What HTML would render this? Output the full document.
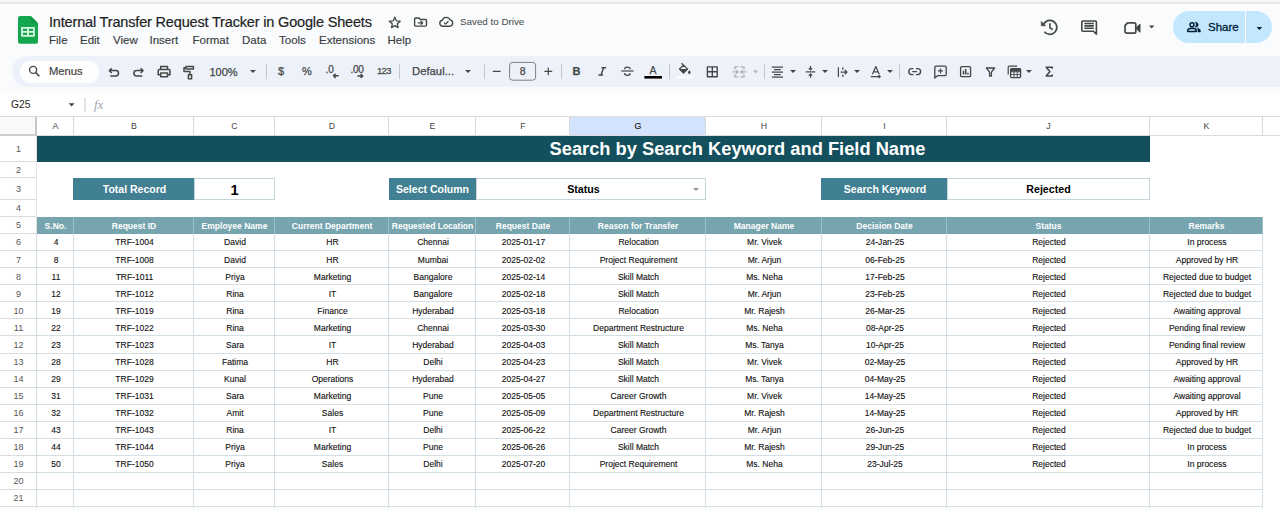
<!DOCTYPE html>
<html><head><meta charset="utf-8">
<style>
html,body{margin:0;padding:0}
body{width:1280px;height:508px;overflow:hidden;background:#f9fbfd;font-family:"Liberation Sans",sans-serif;position:relative;color:#1f1f1f}
div{box-sizing:border-box}
#topline{position:absolute;left:0;top:0;width:1280px;height:5px;height:7px;background:linear-gradient(#f7f7f7 0,#f5f5f5 1.8px,#e2e2e2 2.2px,#e6e6e6 3.4px,#fdfdfd 4px,#fdfdfd 5.5px,#f9fbfd 7px)}
#title{position:absolute;left:49px;top:13.5px;font-size:14.5px;color:#1f1f1f;-webkit-text-stroke:0.2px #1f1f1f;white-space:nowrap;letter-spacing:-0.17px}
.menu{position:absolute;top:33.5px;font-size:11.5px;color:#3a3d3f;-webkit-text-stroke:0.15px #3a3d3f;white-space:nowrap}
#saved{position:absolute;left:460px;top:15.8px;font-size:9.8px;color:#444746}
#toolbar{position:absolute;left:12px;top:56px;width:1290px;height:31px;border-radius:16px;background:#edf2fa}
#menus{position:absolute;left:19.5px;top:60.5px;width:79.5px;height:22px;border-radius:11px;background:#fff}
#menus span{position:absolute;left:29.5px;top:4px;font-size:11.2px;color:#444746;-webkit-text-stroke:0.2px #444746}
.tb{position:absolute;font-size:11.5px;color:#444746;white-space:nowrap;-webkit-text-stroke:0.25px #444746}
.sep{position:absolute;top:64px;width:1px;height:15px;background:#c7c7c7}
.arr{position:absolute;width:0;height:0;border-left:3px solid transparent;border-right:3px solid transparent;border-top:3.5px solid #444746;margin-left:0.5px}
#fbar{position:absolute;left:0;top:93px;width:1280px;height:24px;background:#fff}
#namebox{position:absolute;left:11px;top:98.5px;font-size:10.3px;color:#1f1f1f}
#share{position:absolute;left:1173px;top:11px;width:99px;height:32px;border-radius:16px;background:#c2e7ff}
#share .t{position:absolute;left:35px;top:9.5px;font-size:11.5px;color:#001d35;-webkit-text-stroke:0.3px #001d35}
#share .d{position:absolute;left:72px;top:0;width:1px;height:32px;background:#f9fbfd}
svg{position:absolute;overflow:visible}
/* grid */
#grid{position:absolute;left:0;top:0;width:1280px;height:508px}
#sheet{position:absolute;left:0;top:117px;width:1280px;height:400px;background:#fff}
#grid>div{position:absolute}
.colhdr-bg{left:0;top:116px;width:1280px;height:20px;background:#fff;border-top:1px solid #dcdcdc;border-bottom:1px solid #dcdcdc}
.ch{font-size:8.8px;color:#444;text-align:center;line-height:19px;padding-left:1px;border-right:1px solid #d9d9d9;background:#fff}
.ch.sel{background:#d3e3fd;color:#1f1f1f;-webkit-text-stroke:0.2px #1f1f1f}
.corner{left:0;top:117px;width:37px;height:19px;background:#f8f9fa;border-right:2.5px solid #c6c6c6;border-bottom:2.5px solid #cfcfcf}
.rh{font-size:9px;color:#555;text-align:center;border-right:1px solid #e3e3e3;padding-left:1px}
.rl{background:#dcdcdc}
.gl{background:#d2e0e6}
.banner{background:#134f5c;color:#fff;font-weight:bold;font-size:18.3px;text-align:center;line-height:26px;padding-left:288px}
.lbl{background:#417f92;color:#fff;font-weight:bold;font-size:10.5px;text-align:center;line-height:22px}
.val{background:#fff;border:1px solid #c4d5db;color:#000;font-weight:bold;font-size:10.67px;text-align:center;line-height:20px}
.val.big{font-size:14.67px;line-height:22px}
.dd{position:absolute;right:6.5px;top:8.5px;width:0;height:0;border-left:3px solid transparent;border-right:3px solid transparent;border-top:3.5px solid #8f8f8f}
.th{background:#76a5af;color:#fff;font-weight:bold;font-size:8.53px;text-align:center;line-height:18px;padding-left:1px;border-right:1px solid #9fc0c7;white-space:nowrap}
.td{font-size:8.53px;color:#111;-webkit-text-stroke:0.12px #111;text-align:center;line-height:17px;padding-left:1px;white-space:nowrap}
</style></head><body>
<div id="topline"></div>
<!-- logo -->
<svg style="left:17.500px;top:15.800px" width="20" height="28" viewBox="0 0 20 28"><path d="M2.200 0h10.600l7.200 7.200v18.600a2 2 0 0 1-2 2H2.200a2.200 2.200 0 0 1-2.200-2.200V2.200a2.200 2.200 0 0 1 2.200-2.200z" fill="#14a750"/><path d="M12.800 0l7.200 7.200h-5.200a2 2 0 0 1-2-2z" fill="#0f9645"/><path d="M3.100 11h13.700v9.700H3.100zM4.900 12.800v2.100h4.100v-2.100zM10.900 12.800v2.100H15v-2.100zM4.900 16.800v2.100h4.100v-2.100zM10.900 16.800v2.100H15v-2.100z" fill="#d6f5df" fill-rule="evenodd"/></svg>
<div id="title">Internal Transfer Request Tracker in Google Sheets</div>
<div class="menu" style="left:49px">File</div>
<div class="menu" style="left:80px">Edit</div>
<div class="menu" style="left:113px">View</div>
<div class="menu" style="left:149.5px">Insert</div>
<div class="menu" style="left:192.5px">Format</div>
<div class="menu" style="left:242px">Data</div>
<div class="menu" style="left:279px">Tools</div>
<div class="menu" style="left:319px">Extensions</div>
<div class="menu" style="left:387.5px">Help</div>
<div id="saved">Saved to Drive</div>
<!--HEADICONS-->
<div id="share"><div class="t">Share</div><div class="d"></div></div>
<div id="fbar"></div>
<div id="toolbar"></div>
<div id="menus"><span>Menus</span></div>

<div class="tb" style="left:209.500px;top:65.500px;font-size:11px">100%</div>
<div class="arr" style="left:249px;top:69.500px"></div>
<div class="sep" style="left:266px"></div>
<div class="tb" style="left:278px;top:65px;font-size:11px">$</div>
<div class="tb" style="left:302px;top:65px;font-size:11px">%</div>
<div class="tb" style="left:325.500px;top:63.500px;font-size:10px">.0</div>
<div class="tb" style="left:350.500px;top:63.500px;font-size:10px;letter-spacing:-0.3px">.00</div>
<div class="tb" style="left:377px;top:66px;font-size:9.300px;letter-spacing:-0.55px">123</div>
<div class="sep" style="left:399px"></div>
<div class="tb" style="left:412px;top:65px;font-size:11.300px">Defaul...</div>
<div class="arr" style="left:464.500px;top:69.500px"></div>
<div class="sep" style="left:484px"></div>
<div class="tb" style="left:519.700px;top:64.700px;font-size:10.500px">8</div>
<div class="sep" style="left:561px"></div>
<div class="tb" style="left:572.500px;top:64.500px;font-size:11px;font-weight:bold">B</div>
<div class="tb" style="left:649.500px;top:63.500px;font-size:10.500px">A</div>
<div class="sep" style="left:669px"></div>
<div class="sep" style="left:764px"></div>
<div class="arr" style="left:789px;top:69.500px"></div>
<div class="arr" style="left:821px;top:69.500px"></div>
<div class="arr" style="left:853.500px;top:69.500px"></div>
<div class="arr" style="left:886px;top:69.500px"></div>
<div class="sep" style="left:899px"></div>
<div class="arr" style="left:1025.500px;top:69.500px"></div>
<div class="tb" style="left:94px;top:96.500px;font-size:13px;font-style:italic;font-family:'Liberation Serif',serif;color:#a2a6aa;-webkit-text-stroke:0">fx</div>
<svg id="ico" style="left:0;top:0" width="1280" height="117" viewBox="0 0 1280 117" fill="none" stroke="#444746" stroke-width="1.5" stroke-linecap="butt" stroke-linejoin="round">
<!-- header: star -->
<path d="M394.800 17.200l1.600 3.600 3.800.4-2.900 2.600.8 3.800-3.300-2-3.300 2 .8-3.800-2.900-2.600 3.800-.4z" stroke-width="1.300"/>
<!-- folder move -->
<path d="M415.600 18h3.400l1.300 1.500h5.200a1 1 0 0 1 1 1v4.600a1 1 0 0 1-1 1H415.600a1 1 0 0 1-1-1V19a1 1 0 0 1 1-1z" stroke-width="1.400"/>
<path d="M417.800 22.800h4.800M420.700 20.900l1.900 1.900-1.900 1.900" stroke-width="1.300"/>
<!-- cloud done -->
<path d="M442.800 26.200a3 3 0 0 1-.5-5.950 4.100 4.100 0 0 1 7.700-.4 3.200 3.200 0 0 1-.4 6.350z" stroke-width="1.400"/>
<path d="M444 22.600l1.600 1.500 2.800-2.900" stroke-width="1.300"/>
<!-- history -->
<g stroke-width="1.6">
<path d="M1043.500 24.400a7 7 0 1 1 .9 7.300" stroke-width="1.700"/>
<path d="M1049.900 23.200v4.600l2.900 1.800" stroke-width="1.600"/>
<path d="M1041.300 21.400v4.400h4.400z" fill="#444746" stroke-width="0.600"/>
</g>
<!-- comment -->
<path d="M1082.8 21h12.6a1 1 0 0 1 1 1v12.3l-3-3h-10.6a1 1 0 0 1-1-1V22a1 1 0 0 1 1-1z" stroke-width="1.6"/>
<path d="M1084.400 23.500h9.400M1084.400 25.900h9.400M1084.400 28.300h9.400" stroke-width="1.600"/>
<!-- video -->
<path d="M1127.600 22.800h6.400a1.800 1.800 0 0 1 1.800 1.800v6.800a1.800 1.800 0 0 1-1.800 1.800h-7.200a1.800 1.800 0 0 1-1.800-1.800V25.600z" stroke-width="1.700"/>
<path d="M1136.300 27.600l3.700-3.400v8.000l-3.700-3.400z" fill="#444746" stroke-width="1"/>
<path d="M1149 25.500h5.400l-2.700 3z" fill="#444746" stroke="none"/>
<!-- toolbar: search -->
<circle cx="33.100" cy="69.900" r="3.500" stroke-width="1.400"/>
<path d="M35.700 72.600l3.700 3.700" stroke-width="1.500"/>
<!-- undo -->
<path d="M109.600 70.600H115.800a2.700 2.700 0 0 1 0 5.400H110.200"/>
<path d="M111.800 68.200l-2.400 2.400 2.400 2.400"/>
<!-- redo -->
<path d="M142.800 70.600H136.600a2.700 2.700 0 0 0 0 5.400H142.200"/>
<path d="M140.600 68.200l2.400 2.400-2.400 2.400"/>
<!-- print -->
<path d="M160.700 69.400v-2.900h6.800v2.900"/>
<path d="M160.400 74.800h-2.200v-4.200a1.200 1.200 0 0 1 1.200-1.200h9.400a1.200 1.200 0 0 1 1.200 1.200v4.200h-2.200"/>
<path d="M160.700 72.900h6.800v3.800h-6.800z"/>
<!-- paint roller -->
<path d="M186 66.500h7.400v2.600H186z"/>
<path d="M186 67.700h-2v3.900h6v3.200"/>
<path d="M188.400 74.800h3.200v3.900h-3.200z"/>
<!-- decimal arrows -->
<path d="M338.800 75.800h-5.400M335.600 73.700l-2.200 2.100 2.200 2.100" stroke-width="1.400"/>
<path d="M357.400 76h5.400M360.600 73.900l2.200 2.100-2.200 2.100" stroke-width="1.400"/>
<!-- minus / plus -->
<path d="M492.800 71.300h7.800M544.400 71.300h7.800M548.300 67.400v7.800" stroke-width="1.200"/>
<rect x="509.600" y="62.400" width="26" height="17.800" rx="3" stroke-width="0.9" stroke="#6f7271"/>
<!-- italic -->
<path d="M601.500 67.800h4.600M598.500 75h4.600M603.600 67.800l-2.600 7.200" stroke-width="1.400"/>
<!-- strikethrough -->
<path d="M621.200 71h12.400" stroke-width="1.200"/>
<path d="M630.200 69.300c-.1-1.400-1.200-2.100-2.800-2.100s-2.800.8-2.800 2M624.400 73.200c.2 1.400 1.400 2.200 3 2.200 1.700 0 2.900-.8 2.900-2.100" stroke-width="1.300"/>
<!-- text color bar -->
<rect x="644.400" y="76" width="17.600" height="2.600" fill="#000" stroke="none"/>
<!-- fill bucket -->
<path d="M681.500 63.300l6.100 5.800-4.100 3.900-4-4 4.300-4.100" stroke-width="1.300"/>
<path d="M679.700 69h7.800l-4 3.900z" fill="#444746" stroke="none"/>
<path d="M689.300 70.300c.8 1.100 1.300 1.700 1.300 2.300a1.300 1.300 0 0 1-2.600 0c0-.6.500-1.200 1.300-2.300z" fill="#444746" stroke="none"/>
<rect x="676.500" y="76.200" width="17.400" height="2.200" fill="#fbfcfe" stroke="none"/>
<!-- borders -->
<path d="M707.400 66.900h9.800v9.800h-9.800zM712.300 66.900v9.800M707.400 71.800h9.800" stroke-width="1.400"/>
<!-- merge (disabled) -->
<g stroke="#b0b3b4" stroke-width="1.400">
<path d="M738.400 66.900h-3.600v2.600M738.400 76.900h-3.600v-2.600M740.400 66.900h3.600v2.600M740.400 76.900h3.600v-2.600"/>
<path d="M732.600 71.900h5.200M736.200 70.200l1.800 1.700-1.800 1.700M746.200 71.900h-5.200M742.600 70.200l-1.800 1.700 1.800 1.700"/>
</g>
<path d="M753 70.500h5.200l-2.600 2.900z" fill="#b0b3b4" stroke="none"/>
<!-- halign center -->
<path d="M771.800 67.100h11.200M774 69.600h6.800M771.800 72.100h11.200M774 74.600h6.800M771.800 77.100h11.200" stroke-width="1.100"/>
<!-- valign middle -->
<path d="M805.700 71.900h9.600" stroke-width="1.200"/>
<path d="M810.500 66v3.800M808.700 68.100l1.800 1.800 1.800-1.800M810.500 77.700v-3.800M808.700 75.600l1.800-1.800 1.800 1.800" stroke-width="1.200"/>
<!-- wrap overflow -->
<path d="M838.400 67.200v9.800M842.800 67.200v2.600M842.800 74.400v2.600" stroke-width="1.200"/>
<path d="M840.600 72.100h6.400M844.800 70l2.200 2.100-2.200 2.100" stroke-width="1.200"/>
<!-- rotate A -->
<path d="M872.400 74.200l3.400-7.600 3.400 7.600M873.600 71.900h4.400" stroke-width="1.200"/>
<path d="M870.800 76.600h9.400M878.600 75l1.800 1.600-1.800 1.600" stroke-width="1.100"/>
<!-- link -->
<path d="M913.400 68.600h-1.600a3 3 0 0 0 0 6h1.600M916 68.600h1.600a3 3 0 0 1 0 6h-1.600M912.200 71.600h4.800" stroke-width="1.400"/>
<!-- insert comment -->
<path d="M935.800 66.200h9.400a1 1 0 0 1 1 1v7.400a1 1 0 0 1-1 1h-7.400l-3 2.400V67.200a1 1 0 0 1 1-1z" stroke-width="1.300"/>
<path d="M940.500 68.400v5M938 70.900h5" stroke-width="1.200"/>
<!-- chart -->
<rect x="960.600" y="66.600" width="10" height="10" rx="1.200" stroke-width="1.300"/>
<path d="M963.500 74.600v-3.800M965.700 74.600v-5.600M967.900 74.600v-1.800" stroke-width="1.500"/>
<!-- filter -->
<path d="M986.400 68h8.200l-3.200 4.200v4h-1.800v-4z" stroke-width="1.300"/>
<!-- table -->
<path d="M1008.200 74.600v-7.400a1 1 0 0 1 1-1h8" stroke-width="1.200"/>
<rect x="1010.600" y="68.600" width="10" height="9" rx="1" stroke-width="1.300"/>
<path d="M1010.600 71.800h10M1010.600 74.600h10M1014 71.800v5.800M1017.300 71.800v5.800" stroke-width="0.900"/>
<rect x="1010.600" y="68.600" width="10" height="3" fill="#444746" stroke="none"/>
<!-- sigma -->
<path d="M1052.200 68.800v-1.600h-6l3.700 4.400-3.700 4.400h6v-1.600" stroke-width="1.600"/>
<!-- share people -->
<g stroke="#001d35" stroke-width="1.400">
<circle cx="1192" cy="24.700" r="2"/>
<path d="M1187.700 31.500v-.9c0-1.500 2.500-2.300 4.300-2.300s4.300.8 4.300 2.300v.9z"/>
<path d="M1194.900 22.400a2.500 2.500 0 1 1 0 4.700c.9-.5 1.300-1.400 1.300-2.350s-.4-1.850-1.300-2.350zM1197.200 28c1.700.4 3.200 1.200 3.200 2.600v1.500h-2.500v-1.500c0-1-.2-1.900-.7-2.600z" fill="#001d35" stroke-width="0.400"/>
</g>
<path d="M1256.600 27h5.600l-2.800 3z" fill="#001d35" stroke="none"/>
<!-- name box arrow & fx sep -->
<path d="M68.600 103.200h6l-3 3.200z" fill="#444746" stroke="none"/>
<path d="M85 97.500v14" stroke="#c7c7c7" stroke-width="1"/>
</svg>

<div id="namebox">G25</div>
<div id="sheet"></div>
<div id="grid">
<div class="colhdr-bg"></div>
<div class="ch" style="left:37px;top:117px;width:37px;height:18px;">A</div>
<div class="ch" style="left:74px;top:117px;width:120px;height:18px;">B</div>
<div class="ch" style="left:194px;top:117px;width:81px;height:18px;">C</div>
<div class="ch" style="left:275px;top:117px;width:114px;height:18px;">D</div>
<div class="ch" style="left:389px;top:117px;width:87px;height:18px;">E</div>
<div class="ch" style="left:476px;top:117px;width:94px;height:18px;">F</div>
<div class="ch sel" style="left:570px;top:117px;width:136px;height:18px;">G</div>
<div class="ch" style="left:706px;top:117px;width:116px;height:18px;">H</div>
<div class="ch" style="left:822px;top:117px;width:125px;height:18px;">I</div>
<div class="ch" style="left:947px;top:117px;width:203px;height:18px;">J</div>
<div class="ch" style="left:1150px;top:117px;width:113px;height:18px;">K</div>
<div class="ch" style="left:1263px;top:117px;width:137px;height:18px;">L</div>
<div class="corner"></div>
<div class="rh" style="left:0px;top:136px;width:37px;height:26px;line-height:26px">1</div>
<div class="rl" style="left:0px;top:161px;width:36px;height:1px;"></div>
<div class="rh" style="left:0px;top:162px;width:37px;height:16px;line-height:16px">2</div>
<div class="rl" style="left:0px;top:177px;width:36px;height:1px;"></div>
<div class="rh" style="left:0px;top:178px;width:37px;height:22px;line-height:22px">3</div>
<div class="rl" style="left:0px;top:199px;width:36px;height:1px;"></div>
<div class="rh" style="left:0px;top:200px;width:37px;height:17px;line-height:17px">4</div>
<div class="rl" style="left:0px;top:216px;width:36px;height:1px;"></div>
<div class="rh" style="left:0px;top:217px;width:37px;height:17px;line-height:17px">5</div>
<div class="rl" style="left:0px;top:233px;width:36px;height:1px;"></div>
<div class="rh" style="left:0px;top:234px;width:37px;height:17px;line-height:17px">6</div>
<div class="rl" style="left:0px;top:250px;width:36px;height:1px;"></div>
<div class="rh" style="left:0px;top:252px;width:37px;height:17px;line-height:17px">7</div>
<div class="rl" style="left:0px;top:267px;width:36px;height:1px;"></div>
<div class="rh" style="left:0px;top:269px;width:37px;height:17px;line-height:17px">8</div>
<div class="rl" style="left:0px;top:284px;width:36px;height:1px;"></div>
<div class="rh" style="left:0px;top:286px;width:37px;height:17px;line-height:17px">9</div>
<div class="rl" style="left:0px;top:301px;width:36px;height:1px;"></div>
<div class="rh" style="left:0px;top:303px;width:37px;height:17px;line-height:17px">10</div>
<div class="rl" style="left:0px;top:318px;width:36px;height:1px;"></div>
<div class="rh" style="left:0px;top:320px;width:37px;height:17px;line-height:17px">11</div>
<div class="rl" style="left:0px;top:335px;width:36px;height:1px;"></div>
<div class="rh" style="left:0px;top:337px;width:37px;height:17px;line-height:17px">12</div>
<div class="rl" style="left:0px;top:353px;width:36px;height:1px;"></div>
<div class="rh" style="left:0px;top:354px;width:37px;height:17px;line-height:17px">13</div>
<div class="rl" style="left:0px;top:370px;width:36px;height:1px;"></div>
<div class="rh" style="left:0px;top:371px;width:37px;height:17px;line-height:17px">14</div>
<div class="rl" style="left:0px;top:387px;width:36px;height:1px;"></div>
<div class="rh" style="left:0px;top:388px;width:37px;height:17px;line-height:17px">15</div>
<div class="rl" style="left:0px;top:404px;width:36px;height:1px;"></div>
<div class="rh" style="left:0px;top:405px;width:37px;height:17px;line-height:17px">16</div>
<div class="rl" style="left:0px;top:421px;width:36px;height:1px;"></div>
<div class="rh" style="left:0px;top:422px;width:37px;height:17px;line-height:17px">17</div>
<div class="rl" style="left:0px;top:438px;width:36px;height:1px;"></div>
<div class="rh" style="left:0px;top:439px;width:37px;height:17px;line-height:17px">18</div>
<div class="rl" style="left:0px;top:455px;width:36px;height:1px;"></div>
<div class="rh" style="left:0px;top:456px;width:37px;height:17px;line-height:17px">19</div>
<div class="rl" style="left:0px;top:472px;width:36px;height:1px;"></div>
<div class="rh" style="left:0px;top:473px;width:37px;height:17px;line-height:17px">20</div>
<div class="rl" style="left:0px;top:489px;width:36px;height:1px;"></div>
<div class="rh" style="left:0px;top:490px;width:37px;height:17px;line-height:17px">21</div>
<div class="rl" style="left:0px;top:506px;width:36px;height:1px;"></div>
<div class="rh" style="left:0px;top:508px;width:37px;height:17px;line-height:17px">22</div>
<div class="rl" style="left:0px;top:523px;width:36px;height:1px;"></div>
<div class="gl" style="left:37px;top:233px;width:1226px;height:1px;"></div>
<div class="gl" style="left:37px;top:250px;width:1226px;height:1px;"></div>
<div class="gl" style="left:37px;top:267px;width:1226px;height:1px;"></div>
<div class="gl" style="left:37px;top:284px;width:1226px;height:1px;"></div>
<div class="gl" style="left:37px;top:301px;width:1226px;height:1px;"></div>
<div class="gl" style="left:37px;top:318px;width:1226px;height:1px;"></div>
<div class="gl" style="left:37px;top:335px;width:1226px;height:1px;"></div>
<div class="gl" style="left:37px;top:353px;width:1226px;height:1px;"></div>
<div class="gl" style="left:37px;top:370px;width:1226px;height:1px;"></div>
<div class="gl" style="left:37px;top:387px;width:1226px;height:1px;"></div>
<div class="gl" style="left:37px;top:404px;width:1226px;height:1px;"></div>
<div class="gl" style="left:37px;top:421px;width:1226px;height:1px;"></div>
<div class="gl" style="left:37px;top:438px;width:1226px;height:1px;"></div>
<div class="gl" style="left:37px;top:455px;width:1226px;height:1px;"></div>
<div class="gl" style="left:37px;top:472px;width:1226px;height:1px;"></div>
<div class="gl" style="left:37px;top:489px;width:1226px;height:1px;"></div>
<div class="gl" style="left:37px;top:506px;width:1226px;height:1px;"></div>
<div class="gl" style="left:37px;top:523px;width:1226px;height:1px;"></div>
<div class="gl" style="left:73px;top:233px;width:1px;height:300px;"></div>
<div class="gl" style="left:193px;top:233px;width:1px;height:300px;"></div>
<div class="gl" style="left:274px;top:233px;width:1px;height:300px;"></div>
<div class="gl" style="left:388px;top:233px;width:1px;height:300px;"></div>
<div class="gl" style="left:475px;top:233px;width:1px;height:300px;"></div>
<div class="gl" style="left:569px;top:233px;width:1px;height:300px;"></div>
<div class="gl" style="left:705px;top:233px;width:1px;height:300px;"></div>
<div class="gl" style="left:821px;top:233px;width:1px;height:300px;"></div>
<div class="gl" style="left:946px;top:233px;width:1px;height:300px;"></div>
<div class="gl" style="left:1149px;top:233px;width:1px;height:300px;"></div>
<div class="gl" style="left:1262px;top:233px;width:1px;height:300px;"></div>
<div class="gl" style="left:36px;top:233px;width:1px;height:300px;"></div>
<div class="banner" style="left:37px;top:136px;width:1113px;height:26px;">Search by Search Keyword and Field Name</div>
<div class="lbl" style="left:73px;top:178px;width:121px;height:22px;padding-left:2px">Total Record</div>
<div class="val big" style="left:194px;top:178px;width:81px;height:22px;">1</div>
<div class="lbl" style="left:389px;top:178px;width:87px;height:22px;">Select Column</div>
<div class="val" style="left:476px;top:178px;width:230px;height:22px;padding-right:15px">Status<span class="dd"></span></div>
<div class="lbl" style="left:821px;top:178px;width:126px;height:22px;padding-left:2px">Search Keyword</div>
<div class="val" style="left:947px;top:178px;width:203px;height:22px;">Rejected</div>
<div class="th" style="left:37px;top:217px;width:37px;height:17px;">S.No.</div>
<div class="th" style="left:74px;top:217px;width:120px;height:17px;">Request ID</div>
<div class="th" style="left:194px;top:217px;width:81px;height:17px;">Employee Name</div>
<div class="th" style="left:275px;top:217px;width:114px;height:17px;">Current Department</div>
<div class="th" style="left:389px;top:217px;width:87px;height:17px;">Requested Location</div>
<div class="th" style="left:476px;top:217px;width:94px;height:17px;">Request Date</div>
<div class="th" style="left:570px;top:217px;width:136px;height:17px;">Reason for Transfer</div>
<div class="th" style="left:706px;top:217px;width:116px;height:17px;">Manager Name</div>
<div class="th" style="left:822px;top:217px;width:125px;height:17px;">Decision Date</div>
<div class="th" style="left:947px;top:217px;width:203px;height:17px;">Status</div>
<div class="th" style="left:1150px;top:217px;width:113px;height:17px;">Remarks</div>
<div class="td" style="left:37px;top:234px;width:37px;height:17px;">4</div>
<div class="td" style="left:74px;top:234px;width:120px;height:17px;">TRF-1004</div>
<div class="td" style="left:194px;top:234px;width:81px;height:17px;">David</div>
<div class="td" style="left:275px;top:234px;width:114px;height:17px;">HR</div>
<div class="td" style="left:389px;top:234px;width:87px;height:17px;">Chennai</div>
<div class="td" style="left:476px;top:234px;width:94px;height:17px;">2025-01-17</div>
<div class="td" style="left:570px;top:234px;width:136px;height:17px;">Relocation</div>
<div class="td" style="left:706px;top:234px;width:116px;height:17px;">Mr. Vivek</div>
<div class="td" style="left:822px;top:234px;width:125px;height:17px;">24-Jan-25</div>
<div class="td" style="left:947px;top:234px;width:203px;height:17px;">Rejected</div>
<div class="td" style="left:1150px;top:234px;width:113px;height:17px;">In process</div>
<div class="td" style="left:37px;top:252px;width:37px;height:17px;">8</div>
<div class="td" style="left:74px;top:252px;width:120px;height:17px;">TRF-1008</div>
<div class="td" style="left:194px;top:252px;width:81px;height:17px;">David</div>
<div class="td" style="left:275px;top:252px;width:114px;height:17px;">HR</div>
<div class="td" style="left:389px;top:252px;width:87px;height:17px;">Mumbai</div>
<div class="td" style="left:476px;top:252px;width:94px;height:17px;">2025-02-02</div>
<div class="td" style="left:570px;top:252px;width:136px;height:17px;">Project Requirement</div>
<div class="td" style="left:706px;top:252px;width:116px;height:17px;">Mr. Arjun</div>
<div class="td" style="left:822px;top:252px;width:125px;height:17px;">06-Feb-25</div>
<div class="td" style="left:947px;top:252px;width:203px;height:17px;">Rejected</div>
<div class="td" style="left:1150px;top:252px;width:113px;height:17px;">Approved by HR</div>
<div class="td" style="left:37px;top:269px;width:37px;height:17px;">11</div>
<div class="td" style="left:74px;top:269px;width:120px;height:17px;">TRF-1011</div>
<div class="td" style="left:194px;top:269px;width:81px;height:17px;">Priya</div>
<div class="td" style="left:275px;top:269px;width:114px;height:17px;">Marketing</div>
<div class="td" style="left:389px;top:269px;width:87px;height:17px;">Bangalore</div>
<div class="td" style="left:476px;top:269px;width:94px;height:17px;">2025-02-14</div>
<div class="td" style="left:570px;top:269px;width:136px;height:17px;">Skill Match</div>
<div class="td" style="left:706px;top:269px;width:116px;height:17px;">Ms. Neha</div>
<div class="td" style="left:822px;top:269px;width:125px;height:17px;">17-Feb-25</div>
<div class="td" style="left:947px;top:269px;width:203px;height:17px;">Rejected</div>
<div class="td" style="left:1150px;top:269px;width:113px;height:17px;">Rejected due to budget</div>
<div class="td" style="left:37px;top:286px;width:37px;height:17px;">12</div>
<div class="td" style="left:74px;top:286px;width:120px;height:17px;">TRF-1012</div>
<div class="td" style="left:194px;top:286px;width:81px;height:17px;">Rina</div>
<div class="td" style="left:275px;top:286px;width:114px;height:17px;">IT</div>
<div class="td" style="left:389px;top:286px;width:87px;height:17px;">Bangalore</div>
<div class="td" style="left:476px;top:286px;width:94px;height:17px;">2025-02-18</div>
<div class="td" style="left:570px;top:286px;width:136px;height:17px;">Skill Match</div>
<div class="td" style="left:706px;top:286px;width:116px;height:17px;">Mr. Arjun</div>
<div class="td" style="left:822px;top:286px;width:125px;height:17px;">23-Feb-25</div>
<div class="td" style="left:947px;top:286px;width:203px;height:17px;">Rejected</div>
<div class="td" style="left:1150px;top:286px;width:113px;height:17px;">Rejected due to budget</div>
<div class="td" style="left:37px;top:303px;width:37px;height:17px;">19</div>
<div class="td" style="left:74px;top:303px;width:120px;height:17px;">TRF-1019</div>
<div class="td" style="left:194px;top:303px;width:81px;height:17px;">Rina</div>
<div class="td" style="left:275px;top:303px;width:114px;height:17px;">Finance</div>
<div class="td" style="left:389px;top:303px;width:87px;height:17px;">Hyderabad</div>
<div class="td" style="left:476px;top:303px;width:94px;height:17px;">2025-03-18</div>
<div class="td" style="left:570px;top:303px;width:136px;height:17px;">Relocation</div>
<div class="td" style="left:706px;top:303px;width:116px;height:17px;">Mr. Rajesh</div>
<div class="td" style="left:822px;top:303px;width:125px;height:17px;">26-Mar-25</div>
<div class="td" style="left:947px;top:303px;width:203px;height:17px;">Rejected</div>
<div class="td" style="left:1150px;top:303px;width:113px;height:17px;">Awaiting approval</div>
<div class="td" style="left:37px;top:320px;width:37px;height:17px;">22</div>
<div class="td" style="left:74px;top:320px;width:120px;height:17px;">TRF-1022</div>
<div class="td" style="left:194px;top:320px;width:81px;height:17px;">Rina</div>
<div class="td" style="left:275px;top:320px;width:114px;height:17px;">Marketing</div>
<div class="td" style="left:389px;top:320px;width:87px;height:17px;">Chennai</div>
<div class="td" style="left:476px;top:320px;width:94px;height:17px;">2025-03-30</div>
<div class="td" style="left:570px;top:320px;width:136px;height:17px;">Department Restructure</div>
<div class="td" style="left:706px;top:320px;width:116px;height:17px;">Ms. Neha</div>
<div class="td" style="left:822px;top:320px;width:125px;height:17px;">08-Apr-25</div>
<div class="td" style="left:947px;top:320px;width:203px;height:17px;">Rejected</div>
<div class="td" style="left:1150px;top:320px;width:113px;height:17px;">Pending final review</div>
<div class="td" style="left:37px;top:337px;width:37px;height:17px;">23</div>
<div class="td" style="left:74px;top:337px;width:120px;height:17px;">TRF-1023</div>
<div class="td" style="left:194px;top:337px;width:81px;height:17px;">Sara</div>
<div class="td" style="left:275px;top:337px;width:114px;height:17px;">IT</div>
<div class="td" style="left:389px;top:337px;width:87px;height:17px;">Hyderabad</div>
<div class="td" style="left:476px;top:337px;width:94px;height:17px;">2025-04-03</div>
<div class="td" style="left:570px;top:337px;width:136px;height:17px;">Skill Match</div>
<div class="td" style="left:706px;top:337px;width:116px;height:17px;">Ms. Tanya</div>
<div class="td" style="left:822px;top:337px;width:125px;height:17px;">10-Apr-25</div>
<div class="td" style="left:947px;top:337px;width:203px;height:17px;">Rejected</div>
<div class="td" style="left:1150px;top:337px;width:113px;height:17px;">Pending final review</div>
<div class="td" style="left:37px;top:354px;width:37px;height:17px;">28</div>
<div class="td" style="left:74px;top:354px;width:120px;height:17px;">TRF-1028</div>
<div class="td" style="left:194px;top:354px;width:81px;height:17px;">Fatima</div>
<div class="td" style="left:275px;top:354px;width:114px;height:17px;">HR</div>
<div class="td" style="left:389px;top:354px;width:87px;height:17px;">Delhi</div>
<div class="td" style="left:476px;top:354px;width:94px;height:17px;">2025-04-23</div>
<div class="td" style="left:570px;top:354px;width:136px;height:17px;">Skill Match</div>
<div class="td" style="left:706px;top:354px;width:116px;height:17px;">Mr. Vivek</div>
<div class="td" style="left:822px;top:354px;width:125px;height:17px;">02-May-25</div>
<div class="td" style="left:947px;top:354px;width:203px;height:17px;">Rejected</div>
<div class="td" style="left:1150px;top:354px;width:113px;height:17px;">Approved by HR</div>
<div class="td" style="left:37px;top:371px;width:37px;height:17px;">29</div>
<div class="td" style="left:74px;top:371px;width:120px;height:17px;">TRF-1029</div>
<div class="td" style="left:194px;top:371px;width:81px;height:17px;">Kunal</div>
<div class="td" style="left:275px;top:371px;width:114px;height:17px;">Operations</div>
<div class="td" style="left:389px;top:371px;width:87px;height:17px;">Hyderabad</div>
<div class="td" style="left:476px;top:371px;width:94px;height:17px;">2025-04-27</div>
<div class="td" style="left:570px;top:371px;width:136px;height:17px;">Skill Match</div>
<div class="td" style="left:706px;top:371px;width:116px;height:17px;">Ms. Tanya</div>
<div class="td" style="left:822px;top:371px;width:125px;height:17px;">04-May-25</div>
<div class="td" style="left:947px;top:371px;width:203px;height:17px;">Rejected</div>
<div class="td" style="left:1150px;top:371px;width:113px;height:17px;">Awaiting approval</div>
<div class="td" style="left:37px;top:388px;width:37px;height:17px;">31</div>
<div class="td" style="left:74px;top:388px;width:120px;height:17px;">TRF-1031</div>
<div class="td" style="left:194px;top:388px;width:81px;height:17px;">Sara</div>
<div class="td" style="left:275px;top:388px;width:114px;height:17px;">Marketing</div>
<div class="td" style="left:389px;top:388px;width:87px;height:17px;">Pune</div>
<div class="td" style="left:476px;top:388px;width:94px;height:17px;">2025-05-05</div>
<div class="td" style="left:570px;top:388px;width:136px;height:17px;">Career Growth</div>
<div class="td" style="left:706px;top:388px;width:116px;height:17px;">Mr. Vivek</div>
<div class="td" style="left:822px;top:388px;width:125px;height:17px;">14-May-25</div>
<div class="td" style="left:947px;top:388px;width:203px;height:17px;">Rejected</div>
<div class="td" style="left:1150px;top:388px;width:113px;height:17px;">Awaiting approval</div>
<div class="td" style="left:37px;top:405px;width:37px;height:17px;">32</div>
<div class="td" style="left:74px;top:405px;width:120px;height:17px;">TRF-1032</div>
<div class="td" style="left:194px;top:405px;width:81px;height:17px;">Amit</div>
<div class="td" style="left:275px;top:405px;width:114px;height:17px;">Sales</div>
<div class="td" style="left:389px;top:405px;width:87px;height:17px;">Pune</div>
<div class="td" style="left:476px;top:405px;width:94px;height:17px;">2025-05-09</div>
<div class="td" style="left:570px;top:405px;width:136px;height:17px;">Department Restructure</div>
<div class="td" style="left:706px;top:405px;width:116px;height:17px;">Mr. Rajesh</div>
<div class="td" style="left:822px;top:405px;width:125px;height:17px;">14-May-25</div>
<div class="td" style="left:947px;top:405px;width:203px;height:17px;">Rejected</div>
<div class="td" style="left:1150px;top:405px;width:113px;height:17px;">Approved by HR</div>
<div class="td" style="left:37px;top:422px;width:37px;height:17px;">43</div>
<div class="td" style="left:74px;top:422px;width:120px;height:17px;">TRF-1043</div>
<div class="td" style="left:194px;top:422px;width:81px;height:17px;">Rina</div>
<div class="td" style="left:275px;top:422px;width:114px;height:17px;">IT</div>
<div class="td" style="left:389px;top:422px;width:87px;height:17px;">Delhi</div>
<div class="td" style="left:476px;top:422px;width:94px;height:17px;">2025-06-22</div>
<div class="td" style="left:570px;top:422px;width:136px;height:17px;">Career Growth</div>
<div class="td" style="left:706px;top:422px;width:116px;height:17px;">Mr. Arjun</div>
<div class="td" style="left:822px;top:422px;width:125px;height:17px;">26-Jun-25</div>
<div class="td" style="left:947px;top:422px;width:203px;height:17px;">Rejected</div>
<div class="td" style="left:1150px;top:422px;width:113px;height:17px;">Rejected due to budget</div>
<div class="td" style="left:37px;top:439px;width:37px;height:17px;">44</div>
<div class="td" style="left:74px;top:439px;width:120px;height:17px;">TRF-1044</div>
<div class="td" style="left:194px;top:439px;width:81px;height:17px;">Priya</div>
<div class="td" style="left:275px;top:439px;width:114px;height:17px;">Marketing</div>
<div class="td" style="left:389px;top:439px;width:87px;height:17px;">Pune</div>
<div class="td" style="left:476px;top:439px;width:94px;height:17px;">2025-06-26</div>
<div class="td" style="left:570px;top:439px;width:136px;height:17px;">Skill Match</div>
<div class="td" style="left:706px;top:439px;width:116px;height:17px;">Mr. Rajesh</div>
<div class="td" style="left:822px;top:439px;width:125px;height:17px;">29-Jun-25</div>
<div class="td" style="left:947px;top:439px;width:203px;height:17px;">Rejected</div>
<div class="td" style="left:1150px;top:439px;width:113px;height:17px;">In process</div>
<div class="td" style="left:37px;top:456px;width:37px;height:17px;">50</div>
<div class="td" style="left:74px;top:456px;width:120px;height:17px;">TRF-1050</div>
<div class="td" style="left:194px;top:456px;width:81px;height:17px;">Priya</div>
<div class="td" style="left:275px;top:456px;width:114px;height:17px;">Sales</div>
<div class="td" style="left:389px;top:456px;width:87px;height:17px;">Delhi</div>
<div class="td" style="left:476px;top:456px;width:94px;height:17px;">2025-07-20</div>
<div class="td" style="left:570px;top:456px;width:136px;height:17px;">Project Requirement</div>
<div class="td" style="left:706px;top:456px;width:116px;height:17px;">Ms. Neha</div>
<div class="td" style="left:822px;top:456px;width:125px;height:17px;">23-Jul-25</div>
<div class="td" style="left:947px;top:456px;width:203px;height:17px;">Rejected</div>
<div class="td" style="left:1150px;top:456px;width:113px;height:17px;">In process</div>
</div>
</body></html>
